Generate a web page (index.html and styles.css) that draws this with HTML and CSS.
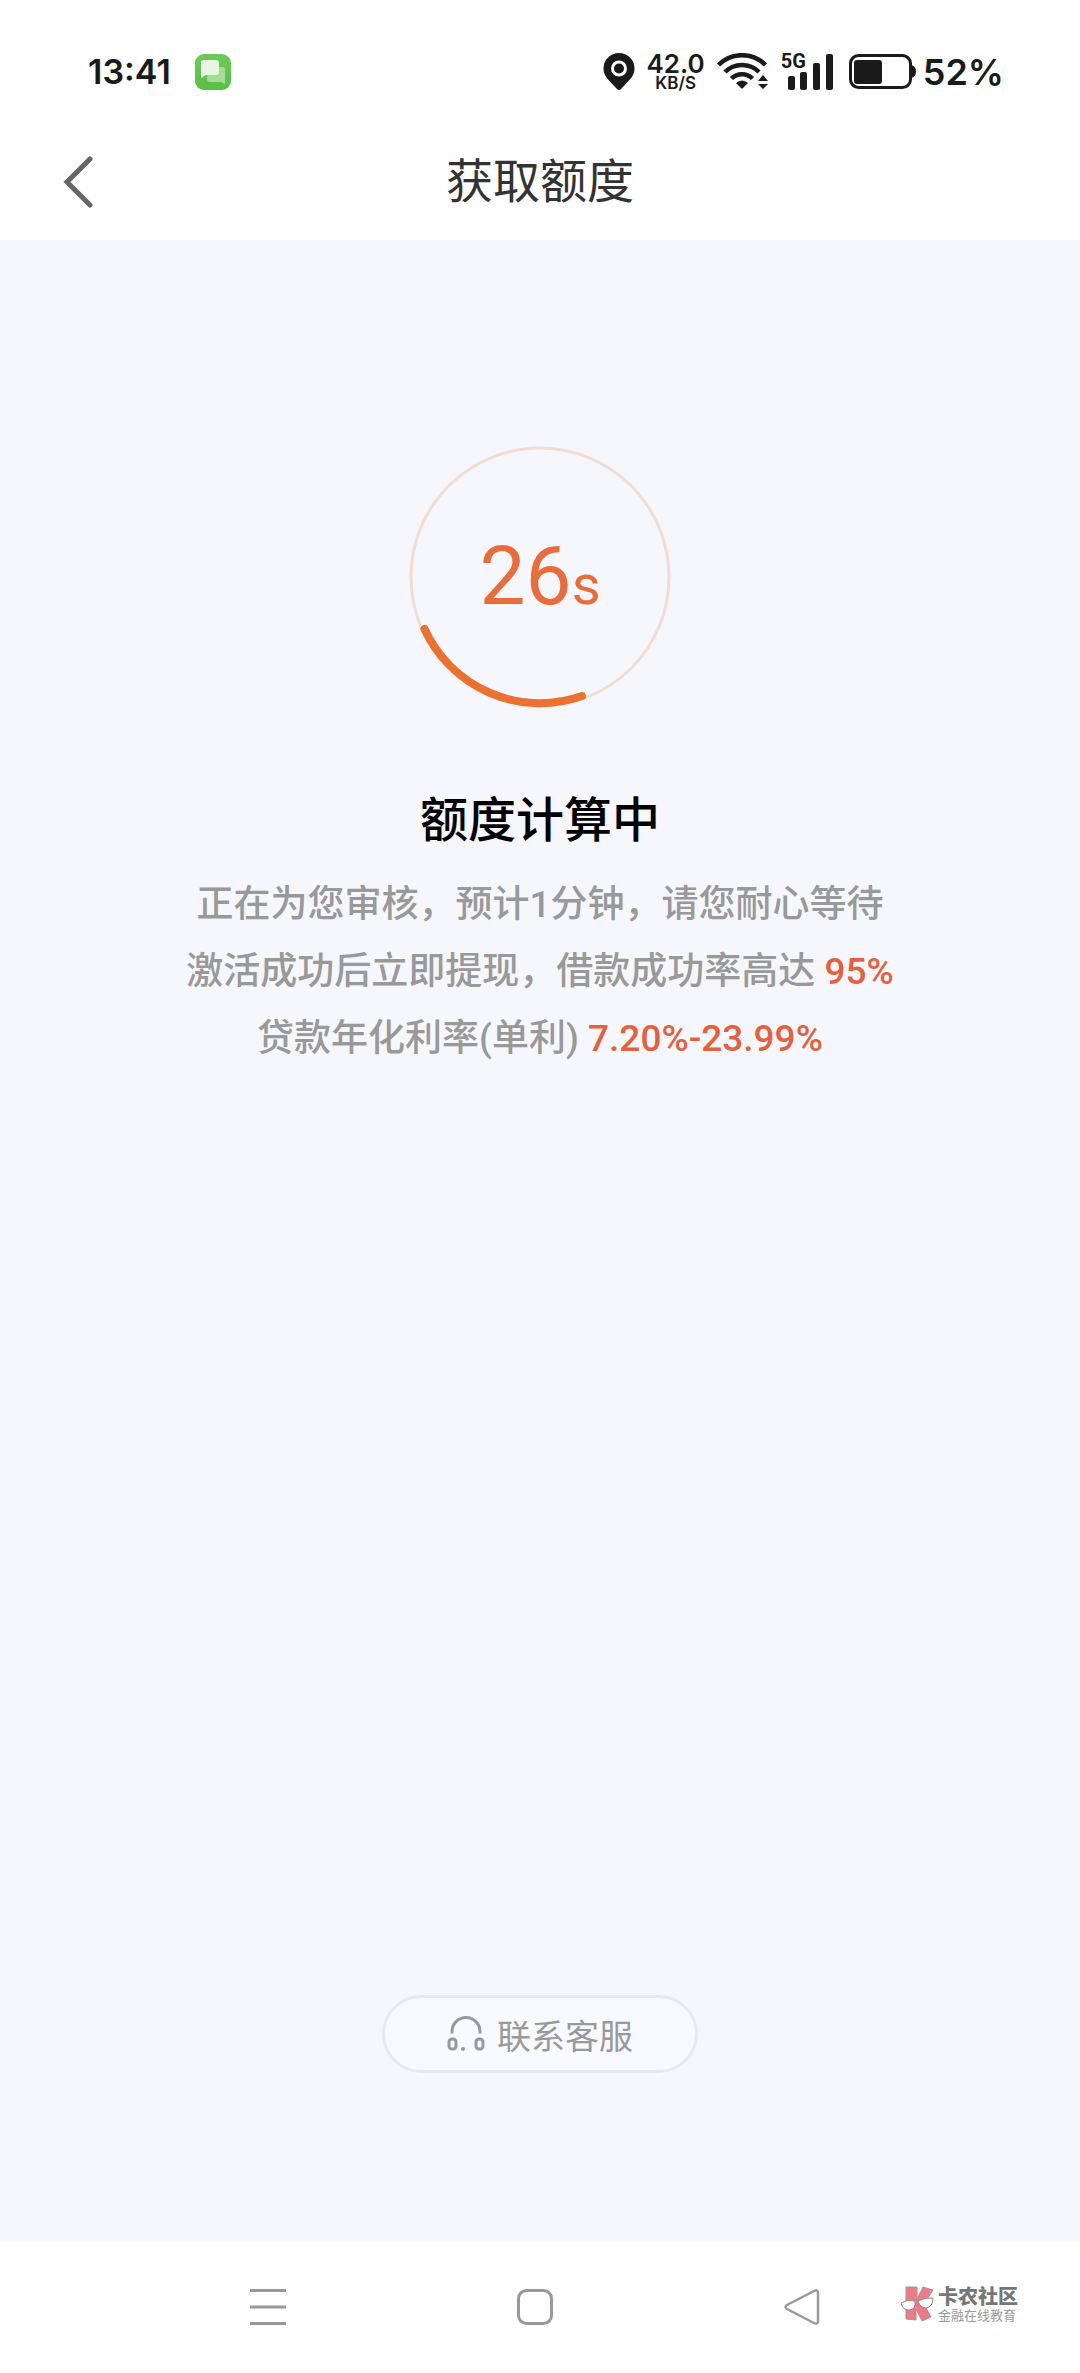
FILE: index.html
```html
<!DOCTYPE html>
<html lang="zh-CN">
  <head>
    <meta charset="utf-8">
    <meta name="viewport" content="width=device-width, initial-scale=1">
    <title>获取额度</title>
    <link rel="stylesheet" href="styles.css">
  </head>
  <body>
    <div class="statusbar">
      <div class="status-left">
        <span class="clock">13:41</span>
        <svg width="36" height="36" viewBox="0 0 36 36">
          <defs>
            <linearGradient id="green" x1="0" y1="0" x2="0" y2="1">
              <stop offset="0" stop-color="#6fca58" />
              <stop offset="1" stop-color="#58bf45" />
            </linearGradient>
          </defs>
          <rect width="36" height="36" rx="9" fill="url(#green)" />
          <path d="M13 13h15q2 0 2 2v15l-4-2H15q-3 0-3-3z" fill="#a5dd98" />
          <path d="M8 6h13q3 0 3 3v9q0 3-3 3H11l-5 3V8q0-2 2-2z" fill="#e6f6e2" />
        </svg>
      </div>
      <div class="status-right">
        <svg class="pin" width="32" height="38" viewBox="0 0 32 38">
          <path fill="#1a1a1a" fill-rule="evenodd" d="M16 0a15.500 15.500 0 0 1 15.500 15.500c0 7-4 10.500-13.500 20.500q-2 2-4 0C4.500 26 .5 22.500.5 15.500A15.500 15.500 0 0 1 16 0zm0 7.500a8 8 0 1 0 0 16 8 8 0 0 0 0-16z" />
          <circle cx="16" cy="15.500" r="5" fill="#1a1a1a" />
        </svg>
        <div class="speed">
          <span class="speed-value">42.0</span>
          <span class="speed-unit">KB/S</span>
        </div>
        <svg class="wifi" width="52" height="38" viewBox="0 0 52 38">
          <g fill="none" stroke="#1a1a1a" stroke-width="4.500">
            <path d="M1.500 12a33 33 0 0 1 47 0" />
            <path d="M8 19a24 24 0 0 1 34 0" />
            <path d="M14.500 25.500a15 15 0 0 1 21 0" />
          </g>
          <path d="M19 30q6-5 12 0l-5 5q-1 1-2 0z" fill="#1a1a1a" />
          <path d="M46 22l5 6H41zM46 36l5-5H41z" fill="#1a1a1a" />
        </svg>
        <div class="signal">
          <svg width="46" height="38" viewBox="0 0 46 38" fill="#1a1a1a">
            <rect x="1" y="23" width="7" height="14" rx="2" />
            <rect x="13" y="19" width="7" height="18" rx="2" />
            <rect x="26" y="10" width="7" height="27" rx="2" />
            <rect x="39" y="1" width="7" height="36" rx="2" />
          </svg>
          <span class="network">5G</span>
        </div>
        <svg class="battery" width="68" height="36" viewBox="0 0 68 36">
          <rect x="1.500" y="1.500" width="60" height="32" rx="8" fill="none" stroke="#1a1a1a" stroke-width="3" />
          <rect x="5" y="6" width="28" height="24" rx="3" fill="#1a1a1a" />
          <path d="M62 11q5 1 5 6.500T62 24z" fill="#1a1a1a" />
        </svg>
        <span class="percent">52%</span>
      </div>
    </div>

    <header>
      <button class="back" aria-label="返回">
        <svg width="32" height="52" viewBox="0 0 32 52">
          <path d="M28 3L5 26l23 23" fill="none" stroke="#666" stroke-width="5" stroke-linecap="round" />
        </svg>
      </button>
      <h1>获取额度</h1>
    </header>

    <main>
      <div class="ring">
        <svg width="268" height="268" viewBox="0 0 268 268" fill="none">
          <circle cx="134" cy="134" r="129" stroke="#f3ddd0" stroke-width="3" />
          <path d="M18.500 186A127 127 0 0 0 176 253" stroke="#ec702f" stroke-width="8" stroke-linecap="round" />
        </svg>
        <div class="countdown">26<small>s</small></div>
      </div>
      <h2>额度计算中</h2>
      <p>正在为您审核，预计1分钟，请您耐心等待</p>
      <p>激活成功后立即提现，借款成功率高达 <em>95%</em></p>
      <p>贷款年化利率(单利) <em>7.20%-23.99%</em></p>

      <button class="service">
        <svg width="38" height="36" viewBox="0 0 38 36" fill="none" stroke="#999" stroke-width="3">
          <path d="M5 17.500v-2a14 14 0 0 1 28 0v2" />
          <rect x="2" y="23" width="7" height="10" rx="3" />
          <rect x="29" y="23" width="7" height="10" rx="3" />
          <circle cx="16" cy="33" r="2" fill="#999" stroke="none" />
        </svg>
        联系客服
      </button>
    </main>

    <nav>
      <button aria-label="菜单">
        <svg width="38" height="38" viewBox="0 0 38 38" stroke="#999" stroke-width="3">
          <path d="M1 2.500h36M1 19h36M1 35.500h36" />
        </svg>
      </button>
      <button aria-label="主屏幕">
        <svg width="38" height="38" viewBox="0 0 38 38" fill="none" stroke="#999" stroke-width="3">
          <rect x="2.500" y="2.500" width="33" height="33" rx="8" />
        </svg>
      </button>
      <button aria-label="后退">
        <svg width="38" height="38" viewBox="0 0 38 38" fill="none" stroke="#999" stroke-width="2.500">
          <path d="M31 3L4 17q-3 2 0 4l27 14q4 2 4-2V5q0-4-4-2z" />
        </svg>
      </button>
      <div class="watermark">
        <svg width="34" height="36" viewBox="0 0 34 36">
          <path d="M6 1h11v12L23 1l10 3-9 14 7 13-9 4-6-12v11l-10-1z" fill="#f07a86" stroke="#999" />
          <path d="M1 17q6-4 14-2 1 8-5 9-7 1-9-7z" fill="#fff" stroke="#888" />
          <path d="M18 15q7-4 15-3 0 9-7 10-6 0-8-7z" fill="#fff" stroke="#888" />
        </svg>
        <div>
          <strong>卡农社区</strong>
          <span>金融在线教育</span>
        </div>
      </div>
    </nav>
  </body>
</html>
```
FILE: styles.css
```css
:root {
  --ink: #1a1a1a;
  --gray: #999;
  --orange: #e86c3c;
  --red: #e4603f;
  --page: #f5f7fc;
}

* {
  box-sizing: border-box;
}

body {
  margin: 0;
  min-height: 100vh;
  display: flex;
  flex-direction: column;
  background-color: #fff;
  color: var(--ink);
  font-family: Roboto, "Noto Sans CJK SC", sans-serif;
}

button {
  background: none;
  border: 0;
  padding: 0;
  font-family: inherit;
  color: inherit;
}
svg {
  display: block;
  flex: none;
}

.statusbar {
  display: flex;
  justify-content: space-between;
  align-items: center;
  height: 124px;
  padding: 20px 76px 0 88px;
  font-family: Inter, sans-serif;
  font-weight: 600;
}
.status-left,
.status-right {
  display: flex;
  align-items: center;
}
.status-left {
  gap: 24px;
}
.clock,
.percent {
  font-size: 34px;
  line-height: 40px;
}
.speed {
  display: flex;
  flex-direction: column;
  align-items: center;
  margin: 0 12px;
}
.speed-value {
  font-size: 26px;
  line-height: 22px;
}
.speed-unit {
  font-size: 17px;
  line-height: 17px;
}
.signal {
  position: relative;
  margin: 0 16px 0 18px;
}
/* sits over the short bars */
.network {
  position: absolute;
  left: -6px;
  top: 0;
  font-family: Roboto, sans-serif;
  font-weight: 700;
  font-size: 20px;
  line-height: 16px;
}
.percent {
  margin-left: 6px;
  font-size: 36px;
}

header {
  display: grid;
  grid-template-columns: 1fr auto 1fr;
  align-items: center;
  height: 116px;
  padding: 0 62px;
}
h1 {
  margin: 0;
  font-size: 47px;
  font-weight: 400;
  line-height: 64px;
  color: #333;
}
.back {
  justify-self: start;
}

main {
  flex: 1;
  display: flex;
  flex-direction: column;
  align-items: center;
  padding: 203px 24px 168px;
  background-color: var(--page);
}
.ring {
  display: grid;
  place-items: center;
}
.ring > * {
  grid-area: 1 / 1;
}
.countdown {
  padding-top: 6px;
  font-size: 82px;
  line-height: 96px;
  color: var(--orange);
}
.countdown small {
  font-size: 56px;
}
h2 {
  margin: 76px 0 16px;
  font-size: 48px;
  font-weight: 500;
  line-height: 68px;
  color: #000;
}
p {
  margin: 0;
  font-size: 37px;
  font-weight: 500;
  line-height: 67px;
  text-align: center;
  color: var(--gray);
}
p em {
  font-style: normal;
  color: var(--red);
}
.service {
  display: flex;
  justify-content: center;
  align-items: center;
  gap: 12px;
  width: 316px;
  height: 78px;
  margin-top: auto;
  border: 3px solid #e8e8ee;
  border-radius: 39px;
  background-color: #f8f9fd;
  font-size: 34px;
  color: var(--gray);
}

nav {
  position: relative;
  display: grid;
  grid-template-columns: repeat(3, 1fr);
  justify-items: center;
  align-items: center;
  height: 132px;
  padding: 0 145px 0 134px;
}
.watermark {
  position: absolute;
  right: 62px;
  top: 44px;
  display: flex;
  align-items: center;
  gap: 4px;
  color: #777;
}
.watermark strong,
.watermark span {
  display: block;
}
.watermark strong {
  font-size: 20px;
  font-weight: 900;
  line-height: 24px;
}
.watermark span {
  font-size: 13px;
  line-height: 14px;
  color: var(--gray);
}
```
